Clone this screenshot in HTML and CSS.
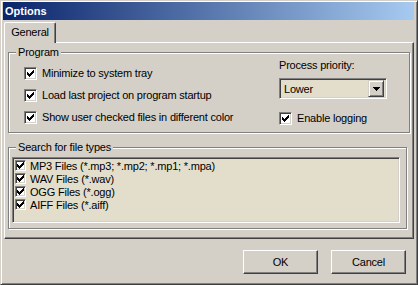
FILE: index.html
```html
<!DOCTYPE html>
<html>
<head>
<meta charset="utf-8">
<title>Options</title>
<link rel="stylesheet" href="styles.css">
</head>
<body>
<div class="window">
  <div class="titlebar">Options</div>
  <div class="tabs"><div class="tab">General</div></div>
  <div class="panel">
    <fieldset class="group group-program">
      <legend>Program</legend>
      <div class="program-body">
        <div class="col-left">
          <div class="check-row"><span class="cb"><svg width="7" height="7" viewBox="0 0 7 7"><path d="M6 0h1v1h-1zM5 1h2v1h-2zM0 2h1v1h-1zM4 2h3v1h-3zM0 3h2v1h-2zM3 3h3v1h-3zM0 4h5v1h-5zM1 5h3v1h-3zM2 6h1v1h-1z" fill="#000"/></svg></span><span>Minimize to system tray</span></div>
          <div class="check-row"><span class="cb"><svg width="7" height="7" viewBox="0 0 7 7"><path d="M6 0h1v1h-1zM5 1h2v1h-2zM0 2h1v1h-1zM4 2h3v1h-3zM0 3h2v1h-2zM3 3h3v1h-3zM0 4h5v1h-5zM1 5h3v1h-3zM2 6h1v1h-1z" fill="#000"/></svg></span><span>Load last project on program startup</span></div>
          <div class="check-row"><span class="cb"><svg width="7" height="7" viewBox="0 0 7 7"><path d="M6 0h1v1h-1zM5 1h2v1h-2zM0 2h1v1h-1zM4 2h3v1h-3zM0 3h2v1h-2zM3 3h3v1h-3zM0 4h5v1h-5zM1 5h3v1h-3zM2 6h1v1h-1z" fill="#000"/></svg></span><span>Show user checked files in different color</span></div>
        </div>
        <div class="col-right">
          <div class="field-label">Process priority:</div>
          <div class="combo">
            <span class="combo-value">Lower</span>
            <span class="combo-btn"><svg width="7" height="4" viewBox="0 0 7 4"><path d="M0 0h7v1h-7zM1 1h5v1h-5zM2 2h3v1h-3zM3 3h1v1h-1z" fill="#000"/></svg></span>
          </div>
          <div class="check-row check-log"><span class="cb"><svg width="7" height="7" viewBox="0 0 7 7"><path d="M6 0h1v1h-1zM5 1h2v1h-2zM0 2h1v1h-1zM4 2h3v1h-3zM0 3h2v1h-2zM3 3h3v1h-3zM0 4h5v1h-5zM1 5h3v1h-3zM2 6h1v1h-1z" fill="#000"/></svg></span><span>Enable logging</span></div>
        </div>
      </div>
    </fieldset>
    <fieldset class="group group-search">
      <legend>Search for file types</legend>
      <div class="listbox">
        <div class="list-item"><span class="cb cb-small"><svg width="7" height="7" viewBox="0 0 7 7"><path d="M6 0h1v1h-1zM5 1h2v1h-2zM0 2h1v1h-1zM4 2h3v1h-3zM0 3h2v1h-2zM3 3h3v1h-3zM0 4h5v1h-5zM1 5h3v1h-3zM2 6h1v1h-1z" fill="#000"/></svg></span><span>MP3 Files (*.mp3; *.mp2; *.mp1; *.mpa)</span></div>
        <div class="list-item"><span class="cb cb-small"><svg width="7" height="7" viewBox="0 0 7 7"><path d="M6 0h1v1h-1zM5 1h2v1h-2zM0 2h1v1h-1zM4 2h3v1h-3zM0 3h2v1h-2zM3 3h3v1h-3zM0 4h5v1h-5zM1 5h3v1h-3zM2 6h1v1h-1z" fill="#000"/></svg></span><span>WAV Files (*.wav)</span></div>
        <div class="list-item"><span class="cb cb-small"><svg width="7" height="7" viewBox="0 0 7 7"><path d="M6 0h1v1h-1zM5 1h2v1h-2zM0 2h1v1h-1zM4 2h3v1h-3zM0 3h2v1h-2zM3 3h3v1h-3zM0 4h5v1h-5zM1 5h3v1h-3zM2 6h1v1h-1z" fill="#000"/></svg></span><span>OGG Files (*.ogg)</span></div>
        <div class="list-item"><span class="cb cb-small"><svg width="7" height="7" viewBox="0 0 7 7"><path d="M6 0h1v1h-1zM5 1h2v1h-2zM0 2h1v1h-1zM4 2h3v1h-3zM0 3h2v1h-2zM3 3h3v1h-3zM0 4h5v1h-5zM1 5h3v1h-3zM2 6h1v1h-1z" fill="#000"/></svg></span><span>AIFF Files (*.aiff)</span></div>
      </div>
    </fieldset>
  </div>
  <div class="buttons">
    <button class="btn">OK</button>
    <button class="btn">Cancel</button>
  </div>
</div>
</body>
</html>
```
FILE: styles.css
```css
* { box-sizing: border-box; }

body {
  margin: 0;
  background: #D4D0C8;
  font-family: "Liberation Sans", Arial, sans-serif;
  font-size: 11px;
  letter-spacing: -0.2px;
  color: #000;
}

.window {
  width: 418px;
  height: 285px;
  border: 1px solid;
  border-color: #D4D0C8 #404040 #404040 #D4D0C8;
  box-shadow: inset 1px 1px #fff, inset -1px -1px #808080;
  padding: 1px 3px 0 2px;
  display: flex;
  flex-direction: column;
  background: #D4D0C8;
}

.titlebar {
  height: 18px;
  flex: none;
  background: linear-gradient(to right, #0A246A, #A6CAF0);
  color: #fff;
  font-weight: bold;
  letter-spacing: 0;
  line-height: 18px;
  padding-left: 2px;
}

.tabs {
  margin-top: 2px;
  height: 20px;
  flex: none;
  display: flex;
  padding-left: 1px;
}

.tab {
  width: 52px;
  height: 21px;
  position: relative;
  z-index: 1;
  background: #D4D0C8;
  border-left: 1px solid #fff;
  border-top: 1px solid #fff;
  border-right: 1px solid #404040;
  box-shadow: inset -1px 0 #808080;
  border-top-left-radius: 2px;
  border-top-right-radius: 2px;
  text-align: center;
  line-height: 19px;
}

.panel {
  flex: none;
  margin-left: 1px;
  border: 1px solid;
  border-color: #fff #404040 #404040 #fff;
  box-shadow: inset -1px -1px #808080;
  padding: 3px 0 9px 3px;
}

.group {
  margin: 0;
  padding: 0;
  min-width: 0;
  border: 1px solid #808080;
  box-shadow: inset 1px 1px #fff, 1px 1px #fff;
}

.group legend {
  margin-left: 7px;
  padding: 0 2px;
  line-height: 13px;
  background: #D4D0C8;
}

.group-program { margin-right: 3px; }
.group-search { margin-right: 6px; margin-top: 8px; }

.program-body {
  display: flex;
  padding: 0 22px 3px 15px;
}

.col-left {
  flex: 1;
  padding-top: 3px;
}

.col-right {
  width: 108px;
  flex: none;
}

.check-row {
  display: flex;
  align-items: center;
  height: 22px;
  gap: 5px;
  white-space: nowrap;
}

.check-log { margin-top: 8px; }

.field-label { line-height: 13px; }

.cb {
  width: 13px;
  height: 13px;
  flex: none;
  border: 1px solid;
  border-color: #808080 #fff #fff #808080;
  box-shadow: inset 1px 1px #404040, inset -1px -1px #D4D0C8;
  background: #fff;
  display: flex;
  align-items: center;
  justify-content: center;
}

.cb svg { display: block; }

.cb-small {
  width: 11px;
  height: 11px;
}

.combo {
  margin-top: 6px;
  height: 21px;
  display: flex;
  align-items: center;
  border: 1px solid;
  border-color: #808080 #fff #fff #808080;
  box-shadow: inset 1px 1px #404040, inset -1px -1px #D4D0C8;
  background: #E3DECC;
  padding: 2px;
}

.combo-value {
  flex: 1;
  padding-left: 2px;
}

.combo-btn {
  width: 16px;
  height: 17px;
  flex: none;
  background: #D4D0C8;
  border: 1px solid;
  border-color: #D4D0C8 #404040 #404040 #D4D0C8;
  box-shadow: inset 1px 1px #fff, inset -1px -1px #808080;
  display: flex;
  align-items: center;
  justify-content: center;
}

.combo-btn svg { display: block; }

.listbox {
  margin: 3px 6px 5px 3px;
  height: 66px;
  border: 1px solid;
  border-color: #808080 #fff #fff #808080;
  box-shadow: inset 1px 1px #404040, inset -1px -1px #D4D0C8;
  background: #E3DECC;
  padding: 1px 0 0 2px;
}

.list-item {
  display: flex;
  align-items: center;
  height: 13px;
  gap: 4px;
  white-space: nowrap;
}

.buttons {
  flex: none;
  margin-top: 11px;
  display: flex;
  justify-content: flex-end;
  gap: 13px;
  padding-right: 8px;
}

.btn {
  width: 75px;
  height: 24px;
  margin: 0;
  padding: 0;
  font-family: inherit;
  font-size: 11px;
  letter-spacing: -0.2px;
  color: #000;
  background: #D4D0C8;
  border: 1px solid;
  border-color: #fff #404040 #404040 #fff;
  box-shadow: inset -1px -1px #808080;
}
```
